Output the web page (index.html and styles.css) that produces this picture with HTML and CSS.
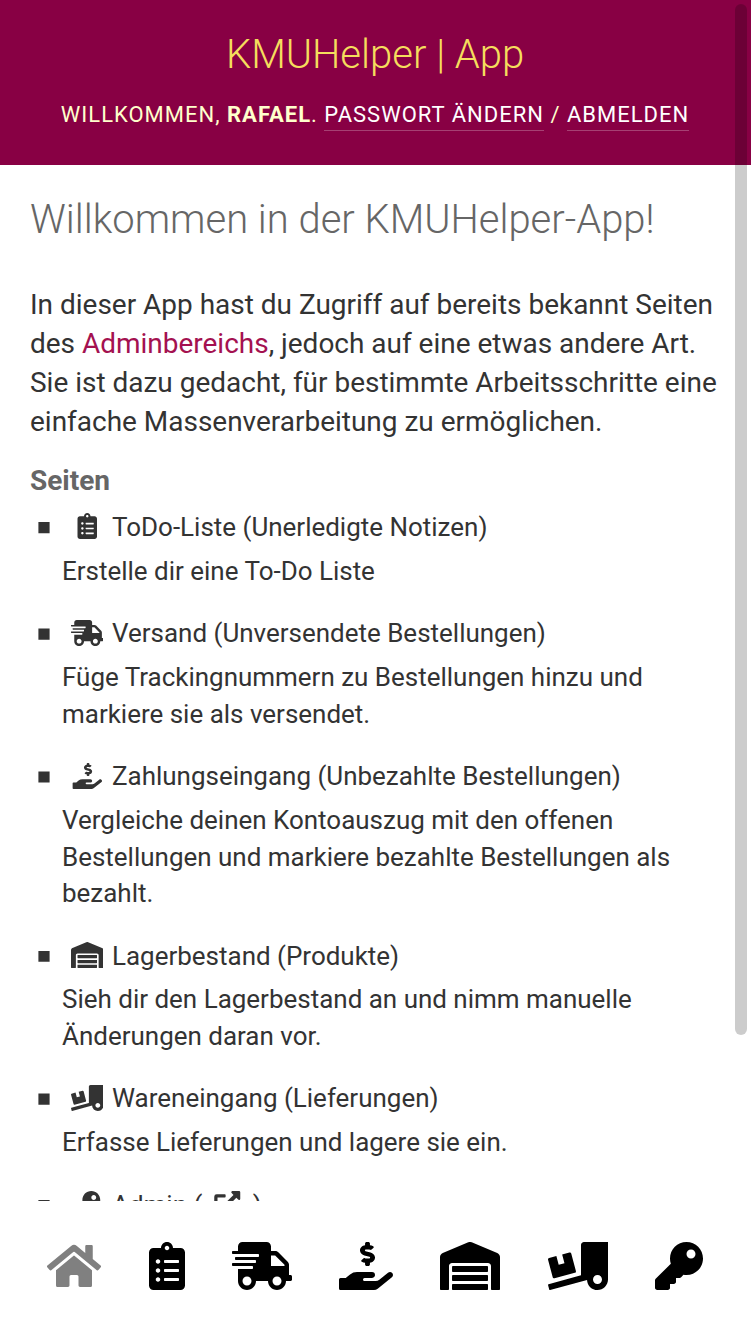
FILE: index.html
```
<!DOCTYPE html>
<html lang="de">
<head>
<meta charset="utf-8">
<title>KMUHelper | App</title>
<link rel="stylesheet" href="styles.css">
</head>
<body>
<svg class="sprite" aria-hidden="true">
  <symbol id="home" viewBox="0 0 576 512"><path d="M280.37 148.26L96 300.11V464a16 16 0 0 0 16 16l112.06-.29a16 16 0 0 0 15.92-16V368a16 16 0 0 1 16-16h64a16 16 0 0 1 16 16v95.64a16 16 0 0 0 16 16.05L464 480a16 16 0 0 0 16-16V300L295.67 148.26a12.19 12.19 0 0 0-15.3 0zM571.6 251.47L488 182.56V44.05a12 12 0 0 0-12-12h-56a12 12 0 0 0-12 12v72.61L318.47 43a48 48 0 0 0-61 0L4.34 251.47a12 12 0 0 0-1.6 16.9l25.5 31A12 12 0 0 0 45.15 301l235.22-193.74a12.19 12.19 0 0 1 15.3 0L530.9 301a12 12 0 0 0 16.9-1.6l25.5-31a12 12 0 0 0-1.7-16.93z"/></symbol>
  <symbol id="list" viewBox="0 0 384 512"><path d="M336 64h-80c0-35.3-28.7-64-64-64s-64 28.7-64 64H48C21.5 64 0 85.5 0 112v352c0 26.5 21.5 48 48 48h288c26.5 0 48-21.5 48-48V112c0-26.5-21.5-48-48-48zM96 424c-13.3 0-24-10.7-24-24s10.7-24 24-24 24 10.7 24 24-10.7 24-24 24zm0-96c-13.3 0-24-10.7-24-24s10.7-24 24-24 24 10.7 24 24-10.7 24-24 24zm0-96c-13.3 0-24-10.7-24-24s10.7-24 24-24 24 10.7 24 24-10.7 24-24 24zm96-192c13.3 0 24 10.7 24 24s-10.7 24-24 24-24-10.7-24-24 10.7-24 24-24zm128 368c0 4.400-3.600 8-8 8H168c-4.400 0-8-3.600-8-8v-16c0-4.400 3.600-8 8-8h144c4.400 0 8 3.600 8 8v16zm0-96c0 4.400-3.600 8-8 8H168c-4.400 0-8-3.600-8-8v-16c0-4.400 3.600-8 8-8h144c4.400 0 8 3.600 8 8v16zm0-96c0 4.400-3.600 8-8 8H168c-4.400 0-8-3.600-8-8v-16c0-4.400 3.600-8 8-8h144c4.400 0 8 3.600 8 8v16z"/></symbol>
  <symbol id="truck" viewBox="0 0 640 512"><path d="M624 352h-16V243.900c0-12.700-5.100-24.900-14.100-33.900L494 110.100c-9-9-21.200-14.100-33.900-14.100H416V48c0-26.500-21.500-48-48-48H112C85.500 0 64 21.500 64 48v48H8c-4.400 0-8 3.600-8 8v16c0 4.400 3.600 8 8 8h272c4.400 0 8 3.600 8 8v16c0 4.400-3.600 8-8 8H40c-4.400 0-8 3.600-8 8v16c0 4.400 3.600 8 8 8h208c4.400 0 8 3.600 8 8v16c0 4.400-3.600 8-8 8H8c-4.400 0-8 3.600-8 8v16c0 4.400 3.600 8 8 8h208c4.400 0 8 3.600 8 8v16c0 4.400-3.600 8-8 8H64v128c0 53 43 96 96 96s96-43 96-96h128c0 53 43 96 96 96s96-43 96-96h48c8.800 0 16-7.200 16-16v-32c0-8.800-7.200-16-16-16zM160 464c-26.500 0-48-21.500-48-48s21.500-48 48-48 48 21.500 48 48-21.500 48-48 48zm320 0c-26.500 0-48-21.500-48-48s21.500-48 48-48 48 21.500 48 48-21.500 48-48 48zm80-208H416V144h44.100l99.900 99.900V256z"/></symbol>
  <symbol id="hand" viewBox="0 0 576 512"><path d="M271.06,144.3l54.27,14.3a8.59,8.59,0,0,1,6.63,8.1c0,4.6-4.09,8.4-9.12,8.4h-35.6a30,30,0,0,1-11.19-2.2c-5.24-2.2-11.28-1.7-15.3,2l-19,17.5a11.68,11.68,0,0,0-2.25,2.66,11.42,11.42,0,0,0,3.88,15.74,83.77,83.77,0,0,0,34.51,11.5V240c0,8.8,7.83,16,17.37,16h17.37c9.55,0,17.38-7.2,17.38-16V222.4c32.93-3.6,57.84-31,53.5-63-3.15-23-22.46-41.3-46.56-47.7L282.68,97.4a8.59,8.59,0,0,1-6.63-8.1c0-4.6,4.09-8.4,9.12-8.4h35.6A30,30,0,0,1,332,83.1c5.23,2.2,11.28,1.7,15.3-2l19-17.5A11.31,11.31,0,0,0,368.47,61a11.43,11.43,0,0,0-3.84-15.78,83.82,83.82,0,0,0-34.52-11.5V16c0-8.8-7.82-16-17.37-16H295.37C285.82,0,278,7.2,278,16V33.6c-32.89,3.6-57.85,31-53.51,63C227.63,119.6,247,137.9,271.06,144.3ZM565.27,328.1c-11.8-10.7-30.2-10-42.6,0L430.27,402a63.64,63.64,0,0,1-40,14H272a16,16,0,0,1,0-32h78.29c15.9,0,30.71-10.9,33.25-26.6a31.2,31.2,0,0,0,.46-5.46A32,32,0,0,0,352,320H192a117.66,117.66,0,0,0-74.1,26.29L71.4,384H16A16,16,0,0,0,0,400v96a16,16,0,0,0,16,16H372.77a64,64,0,0,0,40-14L564,377a32,32,0,0,0,1.28-48.9Z"/></symbol>
  <symbol id="warehouse" viewBox="0 0 640 512"><path d="M504 352H136.400c-4.400 0-8 3.600-8 8l-.1 48c0 4.400 3.600 8 8 8H504c4.400 0 8-3.600 8-8v-48c0-4.400-3.600-8-8-8zm0 96H136.100c-4.400 0-8 3.600-8 8l-.1 48c0 4.400 3.600 8 8 8h368c4.400 0 8-3.600 8-8v-48c0-4.400-3.600-8-8-8zm0-192H136.600c-4.400 0-8 3.600-8 8l-.1 48c0 4.400 3.600 8 8 8H504c4.400 0 8-3.600 8-8v-48c0-4.400-3.600-8-8-8zm106.500-139L338.400 3.700a48.150 48.150 0 0 0-36.900 0L29.500 117C11.700 124.500 0 141.900 0 161.300V504c0 4.400 3.600 8 8 8h80c4.400 0 8-3.600 8-8V256c0-17.600 14.600-32 32.600-32h382.800c18 0 32.600 14.400 32.600 32v248c0 4.400 3.600 8 8 8h80c4.400 0 8-3.600 8-8V161.300c0-19.400-11.700-36.800-29.500-44.300z"/></symbol>
  <symbol id="loading" viewBox="0 0 640 512"><path d="M50.200 375.600c2.300 8.500 11.100 13.600 19.600 11.300l216.400-58c8.500-2.300 13.600-11.100 11.300-19.600l-49.700-185.500c-2.300-8.500-11.100-13.600-19.600-11.300L151 133.300l24.800 92.700-61.800 16.500-24.800-92.700-77.300 20.700C3.400 172.800-1.700 181.600.6 190.100l49.600 185.500zM384 0c-17.700 0-32 14.300-32 32v323.600L5.900 450c-4.300 1.200-6.800 5.600-5.600 9.800l12.600 46.300c1.200 4.300 5.600 6.800 9.800 5.600l393.700-107.400C418.800 464.100 467.600 512 528 512c61.900 0 112-50.100 112-112V0H384zm144 448c-26.500 0-48-21.500-48-48s21.500-48 48-48 48 21.500 48 48-21.500 48-48 48z"/></symbol>
  <symbol id="key" viewBox="0 0 512 512"><path d="M512 176.001C512 273.203 433.202 352 336 352c-11.220 0-22.190-1.062-32.827-3.069l-24.012 27.014A23.999 23.999 0 0 1 261.223 384H224v40c0 13.255-10.745 24-24 24h-40v40c0 13.255-10.745 24-24 24H24c-13.255 0-24-10.745-24-24v-78.059c0-6.365 2.529-12.470 7.029-16.971l161.802-161.802C163.108 213.814 160 195.271 160 176 160 78.798 238.797.001 335.999 0 433.488-.001 512 78.511 512 176.001zM336 128c0 26.510 21.490 48 48 48s48-21.490 48-48-21.490-48-48-48-48 21.490-48 48z"/></symbol>
  <symbol id="external" viewBox="0 0 512 512"><path d="M432,320H400a16,16,0,0,0-16,16V448H64V128H208a16,16,0,0,0,16-16V80a16,16,0,0,0-16-16H48A48,48,0,0,0,0,112V464a48,48,0,0,0,48,48H400a48,48,0,0,0,48-48V336A16,16,0,0,0,432,320ZM488,0h-128c-21.370,0-32.050,25.910-17,41l35.730,35.730L135,320.370a24,24,0,0,0,0,34L157.670,377a24,24,0,0,0,34,0L435.280,133.320,471,169c15,15,41,4.500,41-17V24A24,24,0,0,0,488,0Z"/></symbol>
</svg>
<div class="app">
  <div class="page">
    <header class="header">
      <h1 class="brand">KMUHelper | App</h1>
      <div class="user-tools">Willkommen, <strong>Rafael</strong>. <a class="tool" href="#">Passwort ändern</a> / <a class="tool" href="#">Abmelden</a></div>
    </header>
    <main class="content">
      <h2 class="title">Willkommen in der KMUHelper-App!</h2>
      <p class="intro">In dieser App hast du Zugriff auf bereits bekannt Seiten des <a class="link" href="#">Adminbereichs</a>, jedoch auf eine etwas andere Art. Sie ist dazu gedacht, für bestimmte Arbeitsschritte eine einfache Massenverarbeitung zu ermöglichen.</p>
      <h3 class="subtitle">Seiten</h3>
      <ul class="pages">
        <li class="entry"><div class="entry-title"><svg class="icon"><use href="#list"/></svg>ToDo-Liste (Unerledigte Notizen)</div><p class="entry-text">Erstelle dir eine To-Do Liste</p></li>
        <li class="entry"><div class="entry-title"><svg class="icon"><use href="#truck"/></svg>Versand (Unversendete Bestellungen)</div><p class="entry-text">Füge Trackingnummern zu Bestellungen hinzu und markiere sie als versendet.</p></li>
        <li class="entry"><div class="entry-title"><svg class="icon"><use href="#hand"/></svg>Zahlungseingang (Unbezahlte Bestellungen)</div><p class="entry-text">Vergleiche deinen Kontoauszug mit den offenen Bestellungen und markiere bezahlte Bestellungen als bezahlt.</p></li>
        <li class="entry"><div class="entry-title"><svg class="icon"><use href="#warehouse"/></svg>Lagerbestand (Produkte)</div><p class="entry-text">Sieh dir den Lagerbestand an und nimm manuelle Änderungen daran vor.</p></li>
        <li class="entry"><div class="entry-title"><svg class="icon"><use href="#loading"/></svg>Wareneingang (Lieferungen)</div><p class="entry-text">Erfasse Lieferungen und lagere sie ein.</p></li>
        <li class="entry"><div class="entry-title"><svg class="icon"><use href="#key"/></svg>Admin (<svg class="icon icon-inline"><use href="#external"/></svg>)</div></li>
      </ul>
    </main>
  </div>
  <nav class="navbar">
    <svg class="nav-icon w-54 active"><use href="#home"/></svg>
    <svg class="nav-icon w-36"><use href="#list"/></svg>
    <svg class="nav-icon w-60"><use href="#truck"/></svg>
    <svg class="nav-icon w-54"><use href="#hand"/></svg>
    <svg class="nav-icon w-60"><use href="#warehouse"/></svg>
    <svg class="nav-icon w-60"><use href="#loading"/></svg>
    <svg class="nav-icon w-48"><use href="#key"/></svg>
  </nav>
  <div class="scroll-thumb"></div>
</div>
</body>
</html>
```
FILE: styles.css
```
* { box-sizing: border-box; }
body { margin: 0; background: #fff; color: #333; font-family: Roboto, sans-serif; }
.sprite { position: absolute; width: 0; height: 0; }
.app { position: relative; display: flex; flex-direction: column; width: 751px; height: 1336px; overflow: hidden; }
.page { height: 1201px; overflow: hidden; }
.header { height: 165px; padding: 31px 1px 0 0; background: #880044; color: #ffc; text-align: center; }
.brand { margin: 0; font-size: 40px; font-weight: 300; line-height: 48px; color: #f5dd5d; }
.user-tools { margin-top: 20px; font-size: 22px; line-height: 31px; letter-spacing: 1px; text-transform: uppercase; white-space: nowrap; }
.tool { color: #fff; text-decoration: none; border-bottom: 1px solid rgba(255, 255, 255, .25); padding-bottom: 3px; }
.content { padding: 31px 30px 0; }
.title { margin: 0; font-size: 39.95px; font-weight: 300; line-height: 48px; color: #666; white-space: nowrap; }
.intro { margin: 41px 0 0; font-size: 27.97px; line-height: 39px; }
.link { color: #a41150; text-decoration: none; }
.subtitle { margin: 20px 0 0; font-size: 28px; font-weight: 700; line-height: 39px; color: #666; }
.pages { margin: 9px 0 0; padding: 0 0 0 32px; list-style: none; font-size: 25.98px; line-height: 36.4px; }
.entry { position: relative; margin-bottom: 26.15px; }
.entry::before { content: ""; position: absolute; left: -24px; top: 13px; width: 12px; height: 12px; background: #333; clip-path: inset(0.1px 0.4px 0.7px); }
.entry-title { display: flex; align-items: center; height: 36.4px; padding-left: 8.5px; }
.entry-text { margin: 7.5px 0 0; }
.icon { width: 32.5px; height: 26px; margin: 0 9px 1.6px 0; fill: currentColor; flex: none; }
.icon-inline { margin: 0 9px 1.6px; }
.navbar { display: flex; justify-content: space-evenly; height: 135px; padding: 41px 1px 0 0; background: #fff; }
.nav-icon { height: 48px; fill: #000; flex: none; }
.active { fill: #808080; }
.w-36 { width: 36px; }
.w-48 { width: 48px; }
.w-54 { width: 54px; }
.w-60 { width: 60px; }
.scroll-thumb { position: absolute; top: 4px; left: 735px; width: 12px; height: 1031px; border-radius: 6px; background: rgba(0, 0, 0, .2); }
```
